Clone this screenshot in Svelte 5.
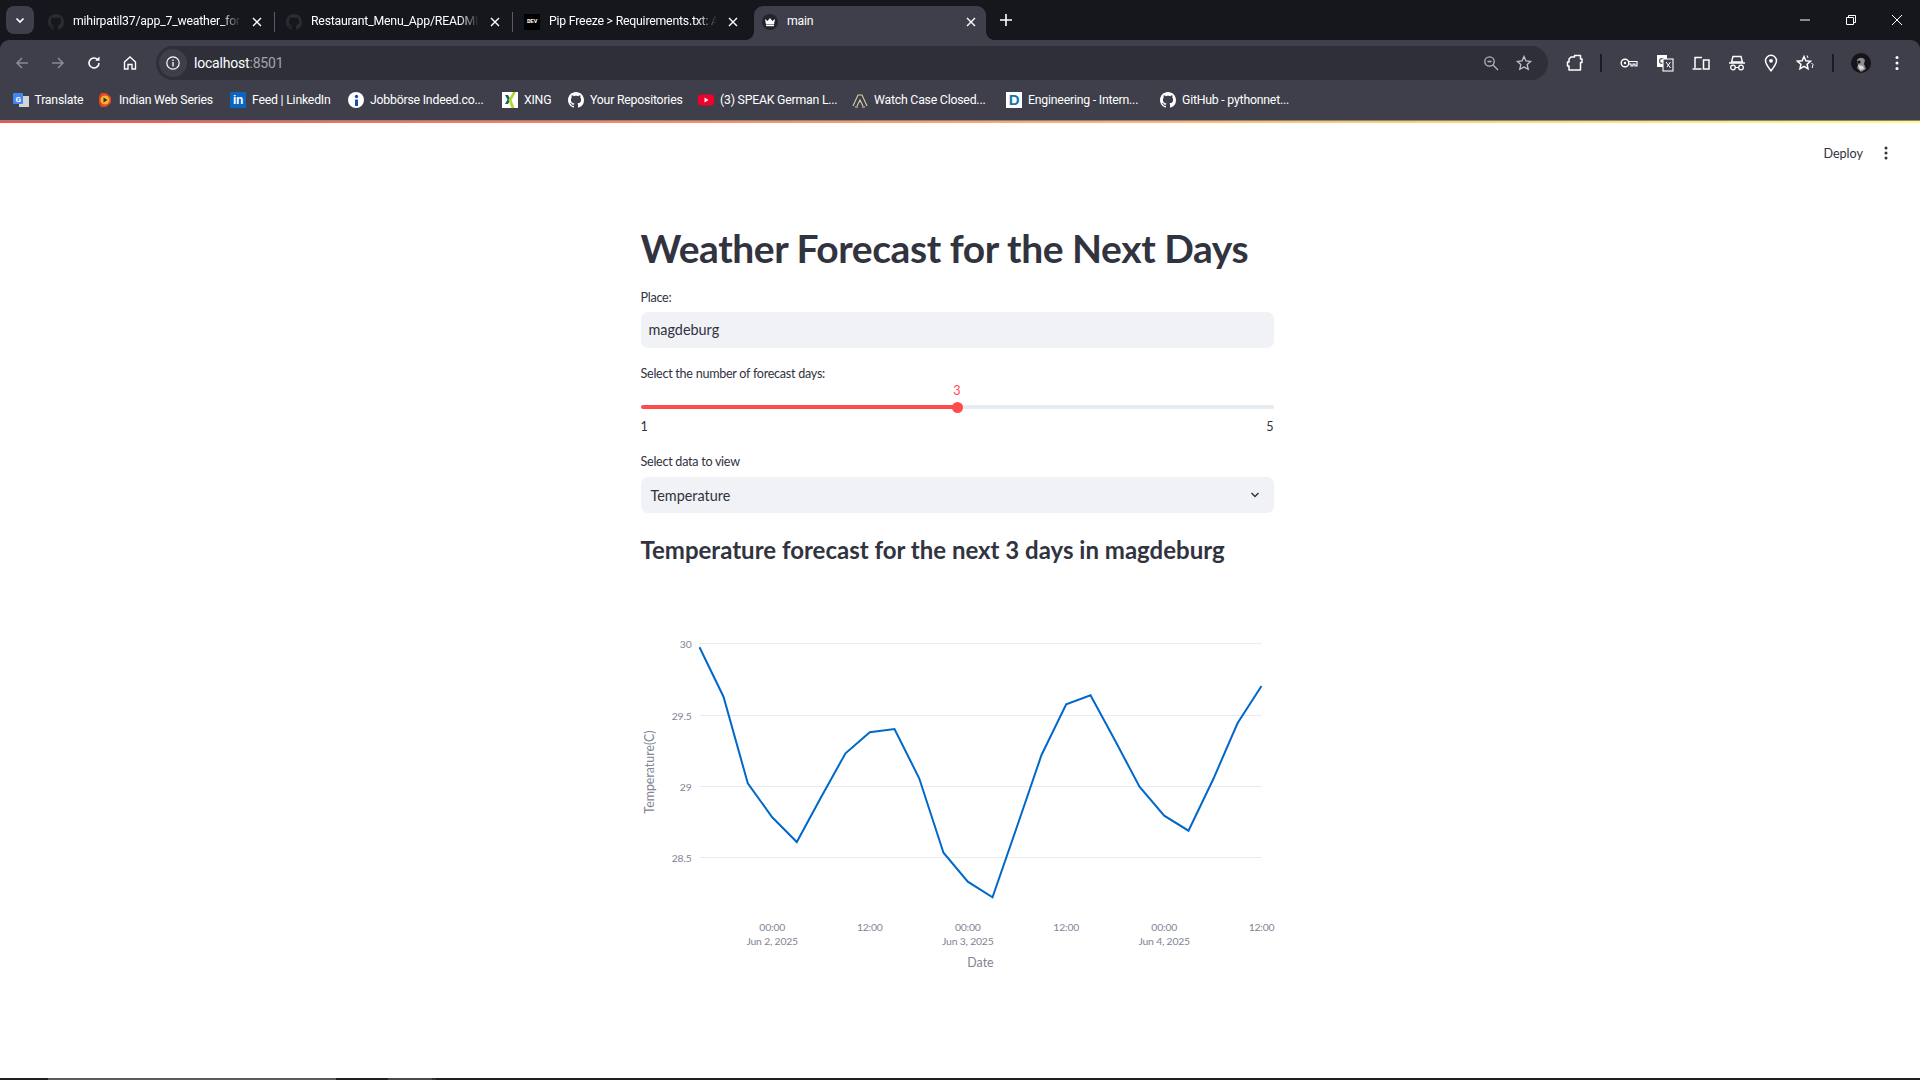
<script>
  const githubPath = 'M8 0C3.58 0 0 3.58 0 8c0 3.54 2.29 6.53 5.47 7.59.4.07.55-.17.55-.38 0-.19-.01-.82-.01-1.49-2.01.37-2.53-.49-2.69-.94-.09-.23-.48-.94-.82-1.13-.28-.15-.68-.52-.01-.53.63-.01 1.08.58 1.23.82.72 1.21 1.87.87 2.33.66.07-.52.28-.87.51-1.07-1.78-.2-3.64-.89-3.64-3.95 0-.87.31-1.59.82-2.15-.08-.2-.36-1.02.08-2.12 0 0 .67-.21 2.2.82.64-.18 1.32-.27 2-.27.68 0 1.36.09 2 .27 1.53-1.04 2.2-.82 2.2-.82.44 1.1.16 1.92.08 2.12.51.56.82 1.27.82 2.15 0 3.07-1.87 3.75-3.65 3.95.29.25.54.73.54 1.48 0 1.07-.01 1.93-.01 2.2 0 .21.15.46.55.38A8.013 8.013 0 0016 8c0-4.42-3.58-8-8-8z';

  const tabs = [
    { title: 'mihirpatil37/app_7_weather_for', icon: 'gh' },
    { title: 'Restaurant_Menu_App/READMI', icon: 'gh' },
    { title: 'Pip Freeze > Requirements.txt: A', icon: 'dev' },
    { title: 'main', icon: 'crown', active: true }
  ];

  const bookmarks = [
    { label: 'Translate', icon: 'translate', width: 84.5 },
    { label: 'Indian Web Series', icon: 'play', width: 133 },
    { label: 'Feed | LinkedIn', icon: 'in', width: 118 },
    { label: 'Jobbörse Indeed.co...', icon: 'indeed', width: 154 },
    { label: 'XING', icon: 'xing', width: 66 },
    { label: 'Your Repositories', icon: 'gh', width: 130 },
    { label: '(3) SPEAK German L...', icon: 'yt', width: 154 },
    { label: 'Watch Case Closed...', icon: 'w', width: 154 },
    { label: 'Engineering - Intern...', icon: 'd', width: 154 },
    { label: 'GitHub - pythonnet...', icon: 'gh', width: 140 }
  ];

  const series = [
    [699, 647.3], [723, 696.7], [747.3, 783.3], [771.7, 817.3], [796.3, 842], [820.7, 797],
    [845, 753.3], [869.3, 732.3], [894, 729], [918.7, 778.3], [943, 852.7], [967.3, 881.7],
    [992, 897.3], [1016.7, 826], [1041, 755], [1065.7, 704.3], [1090, 695.3], [1114.3, 740],
    [1139, 786.7], [1163.7, 815.7], [1188, 830.7], [1212.7, 779.3], [1237, 723.3], [1261, 686]
  ];
  const linePoints = series.map((p) => p.join(',')).join(' ');

  const yTicks = [
    { y: 643.5, label: '30' },
    { y: 715.5, label: '29.5' },
    { y: 786.5, label: '29' },
    { y: 857.5, label: '28.5' }
  ];
  const xTicks = [
    { x: 771.7, time: '00:00', date: 'Jun 2, 2025' },
    { x: 869.3, time: '12:00' },
    { x: 967.3, time: '00:00', date: 'Jun 3, 2025' },
    { x: 1065.7, time: '12:00' },
    { x: 1163.7, time: '00:00', date: 'Jun 4, 2025' },
    { x: 1261, time: '12:00' }
  ];

  const segments = [
    { w: 48, c: '#202020' }, { w: 288, c: '#5c5c5c' }, { w: 52, c: '#202020' },
    { w: 44, c: '#4a4a4a' }, { w: 4, c: '#333333' }, { w: 1484, c: '#202020' }
  ];
</script>

<div class="page">
  <div class="tabstrip">
    <button class="tabsearch" aria-label="Search tabs">
      <svg width="12" height="12" viewBox="0 0 12 12"><path d="M2.5 4.5 6 8l3.5-3.5" fill="none" stroke="#fff" stroke-width="1.7" /></svg>
    </button>
    {#each tabs as tab, i}
      <div class="tab" class:active={tab.active} class:nodiv={i >= 2}>
        <span class="favicon">
          {#if tab.icon === 'gh'}
            <svg width="16" height="16" viewBox="0 0 16 16"><path d={githubPath} fill="#2b2c31" /></svg>
          {:else if tab.icon === 'dev'}
            <span class="devicon">DEV</span>
          {:else}
            <svg width="16" height="16" viewBox="0 0 16 16">
              <circle cx="8" cy="8" r="8" fill="#23242c" />
              <path d="M3 5l2.6 2L8 4l2.4 3L13 5l-1 5.5H4z" fill="#fff" />
              <rect x="4" y="11" width="8" height="1.2" fill="#fff" />
            </svg>
          {/if}
        </span>
        <span class="tabtitle">{tab.title}</span>
        <svg class="tabclose" width="10" height="10" viewBox="0 0 10 10"><path d="M1 1l8 8M9 1L1 9" stroke="#fff" stroke-width="1.4" /></svg>
      </div>
    {/each}
    <svg class="newtab" width="14" height="14" viewBox="0 0 14 14"><path d="M7 1v12M1 7h12" stroke="#fff" stroke-width="1.6" /></svg>
    <div class="winctrls">
      <svg width="12" height="12" viewBox="0 0 12 12"><path d="M1 6h10" stroke="#fff" /></svg>
      <svg width="12" height="12" viewBox="0 0 12 12"><path d="M1.5 3.5h7v7h-7zM3.5 3.5v-2h7v7h-2" fill="none" stroke="#fff" /></svg>
      <svg width="12" height="12" viewBox="0 0 12 12"><path d="M1 1l10 10M11 1L1 11" stroke="#fff" /></svg>
    </div>
  </div>

  <div class="toolbar">
    <div class="navbtns">
      <svg width="16" height="16" viewBox="0 0 16 16"><path d="M14 8H3M8 3L3 8l5 5" fill="none" stroke="#8a8b94" stroke-width="1.5" /></svg>
      <svg width="16" height="16" viewBox="0 0 16 16"><path d="M2 8h11M8 3l5 5-5 5" fill="none" stroke="#8a8b94" stroke-width="1.5" /></svg>
      <svg width="16" height="16" viewBox="0 0 16 16"><path d="M13 8a5 5 0 1 1-1.6-3.7" fill="none" stroke="#fff" stroke-width="1.6" /><path d="M13.5 1.5v4.2H9.3z" fill="#fff" /></svg>
      <svg width="16" height="16" viewBox="0 0 16 16"><path d="M2.5 7L8 2l5.500 5v7h-3.500v-4.500h-4V14h-3.500z" fill="none" stroke="#fff" stroke-width="1.4" /></svg>
    </div>
    <div class="omnibox">
      <span class="siteinfo">
        <svg width="16" height="16" viewBox="0 0 16 16"><circle cx="8" cy="8" r="6.200" fill="none" stroke="#fff" stroke-width="1.200" /><path d="M8 7v4.500M8 4.500v1.500" stroke="#fff" stroke-width="1.300" /></svg>
      </span>
      <span class="url">localhost<span class="port">:8501</span></span>
      <span class="omniicons">
        <svg width="16" height="16" viewBox="0 0 16 16"><circle cx="6.500" cy="6.500" r="4.700" fill="none" stroke="#b5b6bd" stroke-width="1.300" /><path d="M10 10l5 5M4.500 6.500h4" stroke="#b5b6bd" stroke-width="1.300" /></svg>
        <svg width="16" height="16" viewBox="0 0 16 16"><path d="M8 1.500l2 4.400 4.700.5-3.500 3.200 1 4.700L8 11.900l-4.200 2.400 1-4.700L1.300 6.400 6 5.900z" fill="none" stroke="#c4c5cb" stroke-width="1.300" /></svg>
      </span>
    </div>
    <div class="extensions">
      <svg width="18" height="18" viewBox="0 0 18 18"><path d="M5 3h3.500V1.500h6V5h1.500v3.500H14.500V16H3v-4H1.500V8H3V5z" fill="none" stroke="#fff" stroke-width="1.500" stroke-linejoin="round" /></svg>
      <span class="tooldiv first"></span>
      <svg width="18" height="12" viewBox="0 0 18 12"><circle cx="5" cy="6" r="3.800" fill="none" stroke="#fff" stroke-width="1.400" /><circle cx="5" cy="6" r="1.200" fill="#fff" /><path d="M9 4.500h8V9h-2V7h-2v2h-2V7H9" fill="none" stroke="#fff" stroke-width="1.200" /></svg>
      <svg width="18" height="18" viewBox="0 0 18 18"><rect x="1" y="1" width="10" height="12" fill="#fff" /><circle cx="6" cy="7" r="2.400" fill="none" stroke="#555" stroke-width="1.200" /><rect x="7" y="5" width="10" height="12" fill="#3e3f4b" stroke="#fff" stroke-width="1.100" /><path d="M10 8l4.500 6M14.500 8L11 13" stroke="#fff" /></svg>
      <svg width="18" height="16" viewBox="0 0 18 16"><path d="M3 13V2.500h7M0.500 14h9" fill="none" stroke="#fff" stroke-width="1.500" /><rect x="11.500" y="5" width="5.500" height="9" fill="none" stroke="#fff" stroke-width="1.500" /></svg>
      <svg width="18" height="16" viewBox="0 0 18 16"><path d="M5 1.500h8L14.500 7h-11z" fill="none" stroke="#fff" stroke-width="1.400" /><path d="M1 8h16" stroke="#fff" stroke-width="1.500" /><circle cx="5" cy="12.500" r="2.300" fill="none" stroke="#fff" stroke-width="1.300" /><circle cx="13" cy="12.500" r="2.300" fill="none" stroke="#fff" stroke-width="1.300" /><path d="M7.300 12.500h3.400" stroke="#fff" /></svg>
      <svg width="14" height="18" viewBox="0 0 14 18"><path d="M7 16.800C4 13 1.500 10 1.500 6.800a5.500 5.500 0 0 1 11 0C12.500 10 10 13 7 16.800z" fill="none" stroke="#fff" stroke-width="1.500" /><circle cx="7" cy="6.800" r="1.900" fill="#fff" /></svg>
      <svg width="18" height="18" viewBox="0 0 18 18"><path d="M8 2.500l1.900 4.200 4.600.5-3.400 3 .9 4.500L8 12.400l-4 2.300.9-4.500-3.400-3 4.600-.5z" fill="none" stroke="#fff" stroke-width="1.500" /><path d="M11 1.500l1 2.500M15.500 9l1.500 1.500-.8 3.500" fill="none" stroke="#fff" stroke-width="1" /></svg>
      <span class="tooldiv second"></span>
      <span class="avatar">
        <svg width="20" height="20" viewBox="0 0 20 20"><circle cx="10" cy="10" r="10" fill="#14141a" /><path d="M6 7c2-3 6-3 8 0l-1 4 2 5-5 3-4-4 1-3z" fill="#8d8d8d" /><circle cx="8" cy="9" r="1.500" fill="#111" /><path d="M7 12l5 1 1 3-4 1z" fill="#dcdcdc" /></svg>
      </span>
      <svg class="kebab" width="4" height="16" viewBox="0 0 4 16"><circle cx="2" cy="2.500" r="1.500" fill="#fff" /><circle cx="2" cy="8" r="1.500" fill="#fff" /><circle cx="2" cy="13.500" r="1.500" fill="#fff" /></svg>
    </div>
  </div>

  <div class="bookmarks">
    {#each bookmarks as b}
      <div class="bookmark" style:width="{b.width}px">
        <span class="bmicon">
          {#if b.icon === 'translate'}
            <svg width="16" height="16" viewBox="0 0 16 16"><rect x="6" y="4" width="10" height="11" fill="#d4d4d6" /><rect y="1" width="10" height="11" rx="1" fill="#4285f4" /><text x="5" y="9.500" text-anchor="middle" font-size="8" font-weight="700" fill="#fff" font-family="Roboto, sans-serif">G</text></svg>
          {:else if b.icon === 'play'}
            <svg width="16" height="16" viewBox="0 0 16 16"><path d="M4 1h5l5 4v6l-5 4H4L2 11V5z" fill="#e2461f" /><circle cx="8" cy="8" r="4.500" fill="#f7b733" /><path d="M6.500 5.500l4 2.500-4 2.500z" fill="#3a2a20" /></svg>
          {:else if b.icon === 'in'}
            <span class="inicon">in</span>
          {:else if b.icon === 'indeed'}
            <svg width="16" height="16" viewBox="0 0 16 16"><circle cx="8" cy="8" r="8" fill="#fff" /><circle cx="8.500" cy="4.500" r="1.700" fill="#1f4fa3" /><path d="M7 7.500h3V14H7z" fill="#1f4fa3" /></svg>
          {:else if b.icon === 'xing'}
            <svg width="16" height="16" viewBox="0 0 16 16"><rect width="16" height="16" fill="#fff" /><path d="M3 3h3l2.500 4.500L6 12H3l2.500-4.500z" fill="#0b6b63" /><path d="M14 0h-3L6.500 8l3 8h3l-3-8z" fill="#b7d433" /></svg>
          {:else if b.icon === 'gh'}
            <svg width="16" height="16" viewBox="0 0 16 16"><path d={githubPath} fill="#fff" /></svg>
          {:else if b.icon === 'yt'}
            <svg width="16" height="16" viewBox="0 0 16 16"><rect y="2.500" width="16" height="11" rx="3" fill="#f0002c" /><path d="M6.500 5.500l4 2.500-4 2.500z" fill="#fff" /></svg>
          {:else if b.icon === 'w'}
            <svg width="16" height="16" viewBox="0 0 16 16"><path d="M1 14L6 3h4l5 11M5 14l3-6 3 6M3 15h3M10 15h3" fill="none" stroke="#d9cfa8" stroke-width="1.100" /></svg>
          {:else}
            <span class="dicon">D</span>
          {/if}
        </span>
        <span class="bmlabel">{b.label}</span>
      </div>
    {/each}
  </div>

  <div class="decoration"></div>

  <main class="content">
    <header class="apphead">
      <span class="deploy">Deploy</span>
      <svg width="4" height="14" viewBox="0 0 4 14"><circle cx="2" cy="2" r="1.500" fill="#31333f" /><circle cx="2" cy="7" r="1.500" fill="#31333f" /><circle cx="2" cy="12" r="1.500" fill="#31333f" /></svg>
    </header>

    <div class="column">
      <h1>Weather Forecast for the Next Days</h1>

      <label class="field place">
        <span class="lbl">Place:</span>
        <span class="input">magdeburg</span>
      </label>

      <div class="field days">
        <span class="lbl">Select the number of forecast days:</span>
        <div class="slider">
          <span class="value">3</span>
          <div class="track"><div class="fill"></div><div class="thumb"></div></div>
          <div class="ends"><span>1</span><span>5</span></div>
        </div>
      </div>

      <div class="field view">
        <span class="lbl">Select data to view</span>
        <div class="select">
          <span>Temperature</span>
          <svg width="12" height="12" viewBox="0 0 12 12"><path d="M2.500 4l3.500 3.500L9.500 4" fill="none" stroke="#31333f" stroke-width="1.500" /></svg>
        </div>
      </div>

      <h2>Temperature forecast for the next 3 days in magdeburg</h2>

      <svg class="chart" width="633" height="390" viewBox="640.5 590 633 390">
        {#each yTicks as t}
          <line x1="699" x2="1261" y1={t.y} y2={t.y} class="grid" />
          <text x="691" y={t.y + 4.500} text-anchor="end" class="tick">{t.label}</text>
        {/each}
        {#each xTicks as t}
          <text x={t.x} y="931" text-anchor="middle" class="tick">{t.time}</text>
          {#if t.date}
            <text x={t.x} y="945" text-anchor="middle" class="tick">{t.date}</text>
          {/if}
        {/each}
        <polyline points={linePoints} class="line" />
        <text transform="translate(653 772) rotate(-90)" text-anchor="middle" class="axis">Temperature(C)</text>
        <text x="980" y="967" text-anchor="middle" class="axis">Date</text>
      </svg>
    </div>
  </main>

  <div class="taskbar">
    {#each segments as s}
      <span style:width="{s.w}px" style:background={s.c}></span>
    {/each}
  </div>
</div>

<style>
  :global(body) {
    margin: 0;
    background: #fff;
    overflow: hidden;
  }

  .page {
    width: 1920px;
    height: 1080px;
    display: flex;
    flex-direction: column;
    font-family: Roboto, sans-serif;
    background: #16171c;
    overflow: hidden;
  }

  /* browser chrome */
  .tabstrip {
    height: 40px;
    display: flex;
    align-items: flex-end;
    flex: none;
  }
  .tabsearch {
    width: 28px;
    height: 28px;
    margin: 0 3px 6px 6px;
    padding: 0;
    border: 0;
    border-radius: 8px;
    background: #3e3f4b;
    display: flex;
    align-items: center;
    justify-content: center;
  }
  .tab {
    width: 238px;
    height: 34px;
    flex: none;
    position: relative;
    display: flex;
    align-items: center;
    color: #fff;
    font-size: 12.3px;
    letter-spacing: -0.22px;
    box-sizing: border-box;
    padding: 0 0 3px 11px;
  }
  .tab::after {
    content: '';
    position: absolute;
    right: 0;
    top: 6px;
    height: 20px;
    width: 1px;
    background: #5b5c66;
  }
  .tab.nodiv::after {
    display: none;
  }
  .tab.active {
    width: 232px;
    margin-left: 3px;
    padding-left: 8px;
    background: #3e3f4b;
    border-radius: 9px 9px 0 0;
  }
  .tab.active::before,
  .tab.active::after {
    content: '';
    display: block;
    position: absolute;
    top: auto;
    bottom: 0;
    width: 8px;
    height: 8px;
  }
  .tab.active::before {
    left: -8px;
    background: radial-gradient(circle at 0 0, transparent 7.5px, #3e3f4b 8px);
  }
  .tab.active::after {
    right: -8px;
    background: radial-gradient(circle at 100% 0, transparent 7.5px, #3e3f4b 8px);
  }
  .favicon {
    width: 16px;
    height: 16px;
    display: flex;
    margin-right: 9px;
    flex: none;
  }
  .devicon {
    width: 16px;
    height: 16px;
    background: #000;
    color: #fff;
    font: 700 6px/16px "Liberation Mono", monospace;
    text-align: center;
  }
  .tabtitle {
    width: 168px;
    white-space: nowrap;
    overflow: hidden;
    mask-image: linear-gradient(90deg, #000 88%, transparent);
    padding-bottom: 1px;
  }
  .tab.active .tabtitle {
    mask-image: none;
  }
  .tabclose {
    margin-left: 11px;
    flex: none;
  }
  .newtab {
    margin: 0 0 13px 13px;
  }
  .winctrls {
    margin-left: auto;
    display: flex;
    gap: 34px;
    align-items: center;
    padding: 0 17px 14px 0;
  }

  .toolbar {
    height: 40px;
    background: #3e3f4b;
    border-radius: 9px 9px 0 0;
    display: flex;
    align-items: flex-start;
    flex: none;
  }
  .navbtns {
    display: flex;
    gap: 20px;
    padding: 15px 0 0 14px;
    width: 156px;
    flex: none;
    box-sizing: border-box;
  }
  .omnibox {
    margin-top: 6px;
    width: 1392px;
    height: 34px;
    flex: none;
    background: #2e2f38;
    border-radius: 17px;
    display: flex;
    align-items: center;
    color: #fff;
    font-size: 14px;
  }
  .siteinfo {
    width: 28px;
    height: 28px;
    margin-left: 3px;
    border-radius: 50%;
    background: #3e3f4b;
    display: flex;
    align-items: center;
    justify-content: center;
  }
  .url {
    margin-left: 7px;
    letter-spacing: -0.2px;
  }
  .port {
    color: #a4a5ac;
  }
  .omniicons {
    margin-left: auto;
    display: flex;
    gap: 17px;
    padding-right: 16px;
  }
  .extensions {
    flex: 1;
    display: flex;
    align-items: center;
    height: 34px;
    margin-top: 6px;
    padding-left: 18px;
    gap: 18px;
  }
  .tooldiv {
    width: 2px;
    height: 18px;
    background: #1c1d22;
  }
  .tooldiv.first {
    margin-left: -2px;
  }
  .avatar {
    display: flex;
    margin-left: -1px;
  }
  .kebab {
    margin-left: 6px;
  }

  .bookmarks {
    height: 41px;
    background: #3e3f4b;
    border-bottom: 1px solid #85868c;
    box-sizing: border-box;
    padding-left: 12.5px;
    display: flex;
    align-items: center;
    flex: none;
  }
  .bookmark {
    flex: none;
    display: flex;
    align-items: center;
    gap: 6px;
    color: #fff;
    font-size: 12.3px;
    letter-spacing: -0.22px;
  }
  .bmicon {
    width: 16px;
    height: 16px;
    display: flex;
    flex: none;
  }
  .inicon {
    width: 16px;
    height: 16px;
    background: #0a66c2;
    color: #fff;
    font: 700 12px/16px "Liberation Sans", sans-serif;
    text-align: center;
  }
  .dicon {
    width: 16px;
    height: 16px;
    background: #fff;
    color: #1478a8;
    font: 700 15px/16px "Liberation Sans", sans-serif;
    text-align: center;
  }
  .bmlabel {
    white-space: nowrap;
  }
  .decoration {
    height: 2px;
    flex: none;
    background: linear-gradient(90deg, #ff4b4b, #fffd80);
  }

  /* app */
  .content {
    flex: 1;
    min-height: 0;
    display: flex;
    flex-direction: column;
    color: #31333f;
    background: #fff;
    font-family: Lato, sans-serif;
    padding-right: 6px;
  }
  .apphead {
    height: 60px;
    flex: none;
    display: flex;
    align-items: center;
    justify-content: flex-end;
    gap: 21px;
    padding-right: 26px;
    box-sizing: border-box;
  }
  .deploy {
    font-size: 12.6px;
  }
  .column {
    width: 633px;
    margin: 0 auto;
  }
  h1 {
    margin: 40px 0 0;
    font-size: 39px;
    letter-spacing: -0.44px;
    line-height: 50px;
    font-weight: 700;
  }
  .field {
    display: flex;
    flex-direction: column;
  }
  .lbl {
    font-size: 12.6px;
    letter-spacing: -0.28px;
    line-height: 16px;
  }
  .place {
    margin-top: 17px;
    gap: 6px;
  }
  .input {
    height: 36px;
    background: #f0f2f6;
    border-radius: 7px;
    padding-left: 8px;
    line-height: 35px;
    font-size: 14.4px;
  }
  .days {
    margin-top: 18px;
  }
  .slider {
    margin-top: 0;
    position: relative;
  }
  .value {
    display: block;
    width: 100%;
    text-align: center;
    color: #ff4b4b;
    font-size: 12.6px;
    line-height: 18px;
  }
  .track {
    height: 4px;
    margin-top: 5px;
    background: #e6eaf1;
    border-radius: 2px;
    position: relative;
  }
  .fill {
    width: 50%;
    height: 100%;
    background: #ff4b4b;
    border-radius: 2px;
  }
  .thumb {
    position: absolute;
    left: 50%;
    top: -3.5px;
    width: 11px;
    height: 11px;
    margin-left: -5.5px;
    background: #ff4b4b;
    border-radius: 50%;
  }
  .ends {
    display: flex;
    justify-content: space-between;
    font-size: 12.6px;
    line-height: 16px;
    margin-top: 10px;
  }
  .view {
    margin-top: 19px;
    gap: 7px;
  }
  .select {
    height: 36px;
    background: #f0f2f6;
    border-radius: 7px;
    display: flex;
    align-items: center;
    justify-content: space-between;
    padding: 0 13px 0 10px;
    font-size: 14.4px;
  }
  h2 {
    margin: 19px 0 0;
    font-size: 24px;
    line-height: 36px;
    font-weight: 700;
  }
  .chart {
    display: block;
    margin-top: 22px;
    overflow: visible;
  }
  .grid {
    stroke: #e6eaf1;
    stroke-width: 1;
  }
  .tick {
    font-size: 10.4px;
    letter-spacing: -0.2px;
    fill: #808495;
  }
  .axis {
    font-size: 12.4px;
    fill: #808495;
  }
  .line {
    fill: none;
    stroke: #0068c9;
    stroke-width: 2;
  }

  .taskbar {
    height: 2px;
    flex: none;
    display: flex;
  }
</style>
